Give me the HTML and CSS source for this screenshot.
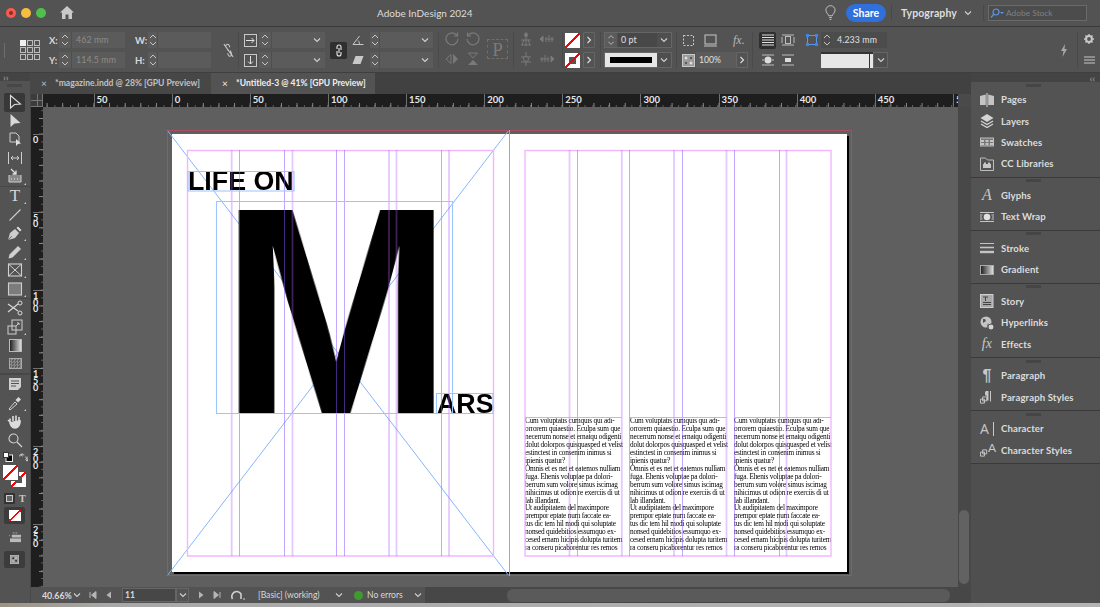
FILE: index.html
```html
<!DOCTYPE html>
<html lang="en">
<head>
<meta charset="utf-8">
<title>Adobe InDesign 2024</title>
<link rel="stylesheet" href="styles.css">
</head>
<body>
<svg class="sprite" width="0" height="0" aria-hidden="true">
  <symbol id="spin" viewBox="0 0 12 16"><path d="M3 6l3-3 3 3M3 10l3 3 3-3" fill="none" stroke="#c4c4c4" stroke-width="1"/></symbol>
  <symbol id="chev" viewBox="0 0 10 10"><path d="M2 3.500l3 3 3-3" fill="none" stroke="#d0d0d0" stroke-width="1.100"/></symbol>
  <symbol id="right" viewBox="0 0 10 10"><path d="M3.500 2l3 3-3 3" fill="none" stroke="#e0e0e0" stroke-width="1.100"/></symbol>
  <symbol id="squares" viewBox="0 0 9 9"><path d="M.5 3.500h4.500v4.500h-4.500zM3 5.500h4.500v-4.500h-4.500z" fill="none" stroke="#cfcfcf"/></symbol>
</svg>

<div class="app">
  <header class="titlebar">
    <span class="light red"></span><span class="light yellow"></span><span class="light green"></span>
    <svg class="home" viewBox="0 0 14 13"><path d="M7 0L0 6.500h2V13h3.500V8.500h3V13H12V6.500h2z" fill="#c9c9c9"/></svg>
    <span class="apptitle">Adobe InDesign 2024</span>
    <svg class="bulb" viewBox="0 0 12 17"><path d="M4 11.500C3.500 9 1 8.500 1 5.500a5 5 0 0 1 10 0c0 3-2.500 3.500-3 6zM4.500 13.500h3M5 15.500h2" fill="none" stroke="#c8c8c8"/></svg>
    <span class="share">Share</span>
    <span class="tsep"></span>
    <span class="workspace">Typography</span>
    <svg class="wschev"><use href="#chev"/></svg>
    <span class="tsep tsep2"></span>
    <span class="stock">
      <svg class="stockicon" viewBox="0 0 14 10"><circle cx="6" cy="4" r="3" fill="none" stroke="#5b96e8" stroke-width="1.200"/><path d="M4 6L1 9.500" stroke="#5b96e8" stroke-width="1.200"/><path d="M10 4h4l-2 2z" fill="#5b96e8"/></svg>
      Adobe Stock
    </span>
  </header>

  <section class="controlbar">
    <div class="cg g-grip"><span class="grip"></span></div>
    <div class="cg g-ref">
      <svg class="refgrid" viewBox="0 0 20 20">
        <rect x=".5" y=".5" width="5" height="5" fill="#eee" stroke="#eee"/><rect x="7.500" y=".5" width="5" height="5" class="rf"/><rect x="14.500" y=".5" width="5" height="5" class="rf"/>
        <rect x=".5" y="7.500" width="5" height="5" class="rf"/><rect x="7.500" y="7.500" width="5" height="5" class="rf"/><rect x="14.500" y="7.500" width="5" height="5" class="rf"/>
        <rect x=".5" y="14.500" width="5" height="5" class="rf"/><rect x="7.500" y="14.500" width="5" height="5" class="rf"/><rect x="14.500" y="14.500" width="5" height="5" class="rf"/>
      </svg>
    </div>
    <div class="cg g-xy">
      <div class="row"><span class="lbl">X:</span><span class="spin"><svg><use href="#spin"/></svg></span><span class="field dim">462 mm</span></div>
      <div class="row"><span class="lbl">Y:</span><span class="spin"><svg><use href="#spin"/></svg></span><span class="field dim">114.5 mm</span></div>
    </div>
    <div class="cg g-wh">
      <div class="row"><span class="lbl">W:</span><span class="spin nar"><svg><use href="#spin"/></svg></span><span class="field"></span></div>
      <div class="row"><span class="lbl">H:</span><span class="spin nar"><svg><use href="#spin"/></svg></span><span class="field"></span></div>
    </div>
    <div class="cg g-link">
      <svg class="linkicon" viewBox="0 0 12 16"><path d="M3 3.500a2 2 0 0 1 3.500-1.500l1 2.500M5 11l1 2.500a2 2 0 0 0 3.500-1.500L8 8M1 1l10 14M4 5l1.500 3" fill="none" stroke="#c8c8c8" stroke-width="1.100"/></svg>
    </div>
    <div class="cg g-scale sep">
      <div class="row"><svg class="ci13" viewBox="0 0 13 13"><rect x=".5" y=".5" width="12" height="12" fill="none" stroke="#c8c8c8"/><path d="M2 6.500h8M7.500 4l2.500 2.500L7.500 9" fill="none" stroke="#e0e0e0"/></svg><span class="spin"><svg><use href="#spin"/></svg></span><span class="field fchev"><svg><use href="#chev"/></svg></span></div>
      <div class="row"><svg class="ci13" viewBox="0 0 13 13"><rect x=".5" y=".5" width="12" height="12" fill="none" stroke="#c8c8c8"/><path d="M6.500 2v8M4 7.500l2.500 2.500L9 7.500" fill="none" stroke="#e0e0e0"/></svg><span class="spin"><svg><use href="#spin"/></svg></span><span class="field fchev"><svg><use href="#chev"/></svg></span></div>
    </div>
    <div class="cg g-chain">
      <span class="chainbtn"><svg viewBox="0 0 8 13"><path d="M2 5V3a2 2 0 0 1 4 0v3M6 8v2a2 2 0 0 1-4 0V7M4 4v5" fill="none" stroke="#e8e8e8" stroke-width="1.100"/></svg></span>
    </div>
    <div class="cg g-angle">
      <div class="row"><svg class="ci12" viewBox="0 0 12 10"><path d="M1 9.500h10.500M1 9.500L7.500 1M6 5.500c1 .8 1.500 2.200 1.500 4" fill="none" stroke="#c8c8c8"/></svg><span class="spin ang"><svg><use href="#spin"/></svg></span><span class="field fchev"><svg><use href="#chev"/></svg></span></div>
      <div class="row"><svg class="ci12" viewBox="0 0 12 10"><path d="M3.500 1h8l-3 8h-8z" fill="#c8c8c8"/></svg><span class="spin ang"><svg><use href="#spin"/></svg></span><span class="field fchev"><svg><use href="#chev"/></svg></span></div>
    </div>
    <div class="cg g-rot sep">
      <div class="rotgrid">
        <svg viewBox="0 0 14 14"><path d="M12 3.500A6 6 0 1 0 13 7M12.500 .5v3.500H9" fill="none" stroke="#7a7a7a" stroke-width="1.200"/></svg>
        <svg viewBox="0 0 14 14"><path d="M2 3.500A6 6 0 1 1 1 7M1.500 .5v3.500H5" fill="none" stroke="#7a7a7a" stroke-width="1.200"/></svg>
        <svg viewBox="0 0 14 14"><path d="M6 2.500v9L1 7z" fill="none" stroke="#7a7a7a"/><path d="M8 2v10l5-5z" fill="#7a7a7a"/></svg>
        <svg viewBox="0 0 14 14"><path d="M2.500 1h9L7 6z" fill="none" stroke="#7a7a7a"/><path d="M2 13h10L7 8z" fill="#7a7a7a"/></svg>
      </div>
      <span class="pbox">P</span>
    </div>
    <div class="cg g-align sep">
      <div class="rotgrid">
        <svg viewBox="0 0 14 14"><path d="M7 0v14M2 8h10M2 13h10M5 8l-2 5M9 8l2 5" stroke="#7a7a7a" fill="none"/><circle cx="7" cy="3" r="2" fill="#7a7a7a"/></svg>
        <svg viewBox="0 0 14 14"><path d="M3 4L0 7l3 3zM5 7h9M6 5v5M9 3v7M12 5v5" fill="#7a7a7a" stroke="#7a7a7a"/></svg>
        <svg viewBox="0 0 14 14"><path d="M7 0v14M2 5h10M2 10h10" stroke="#7a7a7a" fill="none"/><circle cx="7" cy="7" r="2.500" fill="#535353" stroke="#7a7a7a"/></svg>
        <svg viewBox="0 0 14 14"><path d="M11 4l3 3-3 3zM0 7h9M2 5v5M5 3v7M8 5v5" fill="#7a7a7a" stroke="#7a7a7a"/></svg>
      </div>
    </div>
    <div class="cg g-swatch sep">
      <div class="row"><span class="swatch none"></span><span class="arrowbtn"><svg><use href="#right"/></svg></span></div>
      <div class="row"><span class="swatch none stroke"></span><span class="arrowbtn"><svg><use href="#right"/></svg></span></div>
    </div>
    <div class="cg g-weight sep">
      <div class="row framed"><span class="spin"><svg><use href="#spin"/></svg></span><span class="weight">0 pt</span><span class="ddbtn"><svg><use href="#chev"/></svg></span></div>
      <div class="row framed"><span class="strokestyle"><i></i></span><span class="ddbtn"><svg><use href="#chev"/></svg></span></div>
    </div>
    <div class="cg g-fx sep">
      <div class="row">
        <svg class="ci13 fxa" viewBox="0 0 13 13"><path d="M1.500 1.500h10v10h-10z" fill="none" stroke="#c8c8c8" stroke-dasharray="2 1.500"/></svg>
        <svg class="ci13 fxb" viewBox="0 0 13 13"><rect x="1" y="1" width="11" height="9" fill="none" stroke="#c8c8c8"/><path d="M0 12h13" stroke="#8c8c8c" stroke-width="2"/></svg>
        <span class="fxtext">fx.</span>
      </div>
      <div class="row">
        <svg class="ci13 fxa" viewBox="0 0 13 13"><rect x=".5" y=".5" width="12" height="12" fill="#9a9a9a" stroke="#c8c8c8"/><circle cx="4" cy="4" r="1.500" fill="#ddd"/><circle cx="9" cy="9" r="1.500" fill="#ddd"/><circle cx="9" cy="4" r="1" fill="#444"/><circle cx="4" cy="9" r="1" fill="#444"/></svg>
        <span class="opacity">100%</span><span class="arrowbtn op"><svg><use href="#right"/></svg></span>
      </div>
    </div>
    <div class="cg g-wrap sep">
      <div class="rotgrid wrapg">
        <span class="wrapon"><svg viewBox="0 0 14 12"><path d="M1 1h12M1 3.500h12M1 6h12M1 8.500h12M1 11h12" stroke="#e0e0e0"/></svg></span>
        <svg viewBox="0 0 14 12"><path d="M1 1h12M1 11h12M1 3v6M13 3v6" stroke="#bdbdbd"/><rect x="4.500" y="2.500" width="5" height="7" fill="none" stroke="#bdbdbd"/></svg>
        <svg viewBox="0 0 14 12"><path d="M1 1h12M1 11h12" stroke="#bdbdbd"/><circle cx="7" cy="6" r="3.500" fill="#dcdcdc"/><path d="M1 6h2M11 6h2" stroke="#bdbdbd"/></svg>
        <svg viewBox="0 0 14 12"><path d="M1 1h12M1 11h12" stroke="#bdbdbd"/><rect x="4" y="4" width="6" height="4" fill="#dcdcdc"/></svg>
      </div>
    </div>
    <div class="cg g-corner">
      <div class="row"><svg class="ci12 cornericon" viewBox="0 0 12 12"><path d="M1.500 1.500h9v9h-9z" fill="none" stroke="#5b96e8"/><path d="M0 0h3v3H0zM9 0h3v3H9zM0 9h3v3H0zM9 9h3v3H9z" fill="#3f86e6"/></svg><span class="spin"><svg><use href="#spin"/></svg></span><span class="field val">4.233 mm</span></div>
      <div class="row cornerrow"><span class="cornerswatch"></span><span class="ddbtn corner"><svg><use href="#chev"/></svg></span></div>
    </div>
    <div class="cg g-bolt">
      <svg class="bolt" viewBox="0 0 8 13"><path d="M5 0L1 7h2.500L2.500 13 7 5H4.500z" fill="#a8a8a8"/></svg>
    </div>
    <div class="cg g-gear sep">
      <svg class="gear" viewBox="0 0 12 12"><circle cx="6" cy="6" r="3.500" fill="none" stroke="#c8c8c8" stroke-width="2.400"/><path d="M6 0v2M6 10v2M0 6h2M10 6h2M1.800 1.800l1.400 1.400M8.800 8.800l1.400 1.400M1.800 10.200l1.400-1.400M8.800 3.200l1.400-1.400" stroke="#c8c8c8" stroke-width="1.600"/></svg>
      <svg class="menu" viewBox="0 0 11 8"><path d="M0 1h11M0 4h11M0 7h11" stroke="#c8c8c8"/></svg>
    </div>
  </section>

  <div class="workspace-area">
    <aside class="tools">
      <div class="collapse"><span class="chevs">››</span></div>
      <div class="gripbar"></div>
      <div class="tool on"><svg viewBox="0 0 16 16"><path d="M3.500 1.500v12.500l4-3.500 6-.5z" fill="none" stroke="#dedede" stroke-width="1.100"/></svg></div>
      <div class="tool"><svg viewBox="0 0 16 16"><path d="M3.500 1v13l4-3.500 6-.5z" fill="#d8d8d8"/></svg></div>
      <div class="tool"><svg viewBox="0 0 16 16"><path d="M3 2h6l3 3v6H3z" fill="none" stroke="#cfcfcf"/><path d="M9 8v7l2-2 3-.5z" fill="#e0e0e0"/></svg></div>
      <div class="tool"><svg viewBox="0 0 16 16"><path d="M1.500 2v12M14.500 2v12M4 8h8M6 6L4 8l2 2M10 6l2 2-2 2" fill="none" stroke="#cfcfcf"/></svg></div>
      <div class="tool ext"><svg viewBox="0 0 16 16"><path d="M2 7v7h12V7" fill="#888" stroke="#d0d0d0"/><path d="M4 1l5 5M9 2.500V6H5.500" fill="none" stroke="#e0e0e0" stroke-width="1.300"/><path d="M4 11h1M7 11h1M10 11h1" stroke="#eee"/></svg></div>
      <div class="tsp"></div>
      <div class="tool ext type">T</div>
      <div class="tool"><svg viewBox="0 0 16 16"><path d="M2.500 13.500l11-11" stroke="#cfcfcf" stroke-width="1.100"/></svg></div>
      <div class="tool ext"><svg viewBox="0 0 16 16"><path d="M1 15l2-7 5-4 4 4-4 5z" fill="#cfcfcf"/><path d="M9 3l2-2 4 4-2 2zM1 15l4-4" fill="#cfcfcf" stroke="#535353" stroke-width=".8"/></svg></div>
      <div class="tool ext"><svg viewBox="0 0 16 16"><path d="M1.500 14.500l1-4L11 2l3 3-8.500 8.500z" fill="#cfcfcf"/></svg></div>
      <div class="tool ext"><svg viewBox="0 0 16 16"><rect x="1.500" y="2" width="13" height="12" fill="none" stroke="#d0d0d0" stroke-width="1.100"/><path d="M1.500 2l13 12M14.500 2l-13 12" stroke="#d0d0d0"/></svg></div>
      <div class="tool ext"><svg viewBox="0 0 16 16"><rect x="1.500" y="2" width="13" height="12" fill="#7c7c7c" stroke="#cfcfcf" stroke-width="1.100"/></svg></div>
      <div class="tsp"></div>
      <div class="tool"><svg viewBox="0 0 16 16"><path d="M1 4l10 7M1 12l10-8" stroke="#d8d8d8" stroke-width="1.200"/><circle cx="13" cy="3" r="2" fill="none" stroke="#d8d8d8"/><circle cx="13" cy="13" r="2" fill="none" stroke="#d8d8d8"/></svg></div>
      <div class="tool ext"><svg viewBox="0 0 16 16"><rect x="1" y="7" width="8" height="8" fill="none" stroke="#cfcfcf"/><rect x="5" y="1" width="10" height="10" fill="none" stroke="#cfcfcf"/><path d="M9 7l3-3M10 4h2v2" stroke="#cfcfcf" fill="none"/></svg></div>
      <div class="tool"><span class="gradswatch"></span></div>
      <div class="tool"><span class="feather"></span></div>
      <div class="tsp two"></div>
      <div class="tool"><svg viewBox="0 0 16 16"><path d="M2 2h12v9l-3 3H2z" fill="#cfcfcf"/><path d="M4 5h8M4 7.500h8M4 10h5" stroke="#535353"/></svg></div>
      <div class="tool ext"><svg viewBox="0 0 16 16"><path d="M2 14l6-7 2 2-7 6z" fill="none" stroke="#cfcfcf"/><path d="M8.500 5l3-3 2.500 2.500-3 3z" fill="#d8d8d8"/></svg></div>
      <div class="tool"><svg viewBox="0 0 16 16"><path d="M3 9V5.500M6 8V3M9 8V2.500M12 8.500V4M3 9c0 3 2 6 5 6s5-3 5-6V7" fill="#dcdcdc" stroke="#dcdcdc" stroke-width="1.600"/><path d="M3 9l-2-2" stroke="#dcdcdc" stroke-width="1.500"/></svg></div>
      <div class="tool"><svg viewBox="0 0 16 16"><circle cx="6.500" cy="6.500" r="4.500" fill="none" stroke="#d2d2d2" stroke-width="1.100"/><path d="M10 10l5 5" stroke="#d2d2d2" stroke-width="1.300"/></svg></div>
      <div class="swaprow">
        <svg class="defaults" viewBox="0 0 10 10"><rect x="3" y="3" width="6.500" height="6.500" fill="#000" stroke="#eee"/><rect x=".5" y=".5" width="5" height="5" fill="#fff" stroke="#333"/></svg>
        <svg class="swap" viewBox="0 0 10 10"><path d="M1 4V2h5M7 4l2 3M4 .5L2 2l2 1.500M9 9V4M7 7l2 2 1-2" fill="none" stroke="#cfcfcf"/></svg>
      </div>
      <div class="fillstroke">
        <span class="fsback"></span>
        <span class="fsfront"></span>
      </div>
      <div class="formatrow">
        <span class="fmt"><i></i></span>
        <span class="fmtT">T</span>
      </div>
      <div class="toolbtn"><span class="swatch none apply"></span></div>
      <div class="tool modeicon"><svg viewBox="0 0 14 12"><path d="M4 1h2M7 1h2M0 4h1" stroke="#aaa"/><rect x="3" y="3" width="10" height="3" fill="#bbb"/><rect x="1" y="7" width="12" height="4" fill="#bbb"/></svg></div>
      <div class="toolbtn view"><svg viewBox="0 0 14 14"><rect x=".5" y=".5" width="13" height="13" fill="#9a9a9a" stroke="#c8c8c8"/><circle cx="5" cy="5" r="1.500" fill="#333"/><circle cx="9.500" cy="9" r="1.500" fill="#333"/><circle cx="9.500" cy="4.500" r="1" fill="#eee"/><circle cx="4.500" cy="9.500" r="1" fill="#eee"/></svg></div>
    </aside>

    <main class="center">
      <div class="tabs">
        <div class="tab"><span class="x">×</span>*magazine.indd @ 28% [GPU Preview]</div>
        <div class="tab active"><span class="x">×</span>*Untitled-3 @ 41% [GPU Preview]</div>
      </div>
      <div class="hruler">
        <span class="rcorner"></span>
        <div class="hmarks">
          <span>50</span><span>0</span><span>50</span><span>100</span><span>150</span><span>200</span><span>250</span><span>300</span><span>350</span><span>400</span><span>450</span><span>5</span>
        </div>
      </div>
      <div class="middle">
        <div class="vruler">
          <span>0</span><span>50</span><span>100</span><span>150</span><span>200</span><span>250</span>
        </div>
        <div class="canvas">
          <div class="pages"></div>
          <svg class="layer" viewBox="43 107 915 480">
            <path class="xline" d="M167 130L509 576M509 130L167 576"/>
          </svg>
          <div class="frametext lifeon">LIFE ON</div>
          <div class="frametext bigm">M</div>
          <div class="frametext ars">ARS</div>
          <div class="body col1">Cum voluptatis cumquis qui adi-<br>orrorem quiaestio. Eculpa sum que<br>necerrum nonse et ernatqu odigenti<br>dolut dolorpos quisquasped et velist<br>estinctest in consenim inimus si<br>ipienis quatur?<br>Omnis et es net et eatemos nulliam<br>fuga. Ehenis voluptae pa dolori-<br>berrum sum volore simus iscimag<br>nihicimus ut odion re exerciis di ut<br>lab illandant.<br>Ut audipitatem del maximpore<br>prempor eptate num faccate ea-<br>tus dic tem hil modi qui soluptate<br>nonsed quidebitios essumquo ex-<br>cesed ernam hicipis dolupta turitem<br>ra conseru picaborentur res remos</div>
          <div class="body col2">Cum voluptatis cumquis qui adi-<br>orrorem quiaestio. Eculpa sum que<br>necerrum nonse et ernatqu odigenti<br>dolut dolorpos quisquasped et velist<br>estinctest in consenim inimus si<br>ipienis quatur?<br>Omnis et es net et eatemos nulliam<br>fuga. Ehenis voluptae pa dolori-<br>berrum sum volore simus iscimag<br>nihicimus ut odion re exerciis di ut<br>lab illandant.<br>Ut audipitatem del maximpore<br>prempor eptate num faccate ea-<br>tus dic tem hil modi qui soluptate<br>nonsed quidebitios essumquo ex-<br>cesed ernam hicipis dolupta turitem<br>ra conseru picaborentur res remos</div>
          <div class="body col3">Cum voluptatis cumquis qui adi-<br>orrorem quiaestio. Eculpa sum que<br>necerrum nonse et ernatqu odigenti<br>dolut dolorpos quisquasped et velist<br>estinctest in consenim inimus si<br>ipienis quatur?<br>Omnis et es net et eatemos nulliam<br>fuga. Ehenis voluptae pa dolori-<br>berrum sum volore simus iscimag<br>nihicimus ut odion re exerciis di ut<br>lab illandant.<br>Ut audipitatem del maximpore<br>prempor eptate num faccate ea-<br>tus dic tem hil modi qui soluptate<br>nonsed quidebitios essumquo ex-<br>cesed ernam hicipis dolupta turitem<br>ra conseru picaborentur res remos</div>
          <svg class="layer" viewBox="43 107 915 480">
            <path class="bleed" d="M167.500 130.500H851.500V575.500H167.500z"/>
            <path class="spine" d="M509.500 130V576"/>
            <path class="margin" d="M187.500 150.500H493.500V556H187.500zM525 150.500H831V556H525z"/>
            <path class="gthin" d="M239.500 150V556M284.500 150V556M336.500 150V556M344.500 150V556M441.500 150V556M577.500 150V556M629.500 150V556M682.500 150V556M734.500 150V556M779.500 150V556"/>
            <path class="gthick" d="M231.700 150V556M292.500 150V556M389 150V556M396.500 150V556M449 150V556M569.500 150V556M621.800 150V556M674 150V556M726.500 150V556M786.500 150V556"/>
            <path class="frame" d="M188 171.500H294V191H188zM216.500 201.500H452.500V413.500H216.500zM436.500 393.500H493V413.500H436.500z"/>
            <path class="frame" d="M525 417.500H621.500M630 417.500H727M734 417.500H831"/>
          </svg>
        </div>
        <div class="vscroll"><span class="vthumb"></span></div>
      </div>
      <footer class="status">
        <span class="zoomval">40.66%</span>
        <svg class="st chevz"><use href="#chev"/></svg>
        <svg class="st navfirst" viewBox="0 0 10 10"><path d="M2 2v6M8 1.500v7L3.500 5z" stroke="#b4b4b4" fill="#b4b4b4"/></svg>
        <svg class="st navprev" viewBox="0 0 10 10"><path d="M7 1.500v7L2.500 5z" fill="#b4b4b4"/></svg>
        <span class="pagefield">11</span><span class="pagedd"><svg><use href="#chev"/></svg></span>
        <svg class="st navnext" viewBox="0 0 10 10"><path d="M3 1.500v7L7.500 5z" fill="#b4b4b4"/></svg>
        <svg class="st navlast" viewBox="0 0 10 10"><path d="M8 2v6M2 1.500v7L6.500 5z" stroke="#b4b4b4" fill="#b4b4b4"/></svg>
        <svg class="st gauge" viewBox="0 0 14 12"><path d="M1.500 10A4.800 4.800 0 0 1 10 5v5" fill="none" stroke="#cfcfcf" stroke-width="1.600"/><path d="M12 10h2" stroke="#cfcfcf"/></svg>
        <span class="preflight">[Basic] (working)</span>
        <svg class="st chevp"><use href="#chev"/></svg>
        <span class="dot"></span>
        <span class="errors">No errors</span>
        <svg class="st cheve"><use href="#chev"/></svg>
        <span class="hscroll"><span class="hthumb"></span></span>
      </footer>
    </main>

    <aside class="dock">
      <div class="collapse dockhead"><span class="chevs">‹‹</span></div>
      <div class="pgroup">
        <div class="gripbar small"></div>
        <div class="pitem"><svg viewBox="0 0 14 14"><path d="M0 3l5.800-1.500V12H0zM14 3L8.200 1.500V12H14z" fill="#c4c4c4"/><path d="M7 0v14" stroke="#c4c4c4" stroke-width="1.200"/></svg>Pages</div>
        <div class="pitem"><svg viewBox="0 0 14 14"><path d="M7 0l6.500 4L7 8 .5 4z" fill="#d4d4d4"/><path d="M1 7l6 3.500L13 7M1 10l6 3.500 6-3.500" fill="none" stroke="#d4d4d4" stroke-width="1.300"/></svg>Layers</div>
        <div class="pitem"><svg viewBox="0 0 14 14"><rect x=".5" y="3" width="13" height="8" fill="#777" stroke="#bdbdbd"/><path d="M1 5h3v2H1zM5.500 5h3v2h-3zM10 5h3v2h-3zM1 8h3v2H1zM5.500 8h3v2h-3zM10 8h3v2h-3z" fill="#c4c4c4"/></svg>Swatches</div>
        <div class="pitem"><svg viewBox="0 0 14 14"><path d="M.5 1h5l2 2h6v10.500H.5z" fill="none" stroke="#bdbdbd"/><path d="M3 7h8v4H3zM4 5.500h2V7H4zM8 5.500h2V7H8z" fill="#c8c8c8"/></svg>CC Libraries</div>
      </div>
      <div class="pgroup">
        <div class="gripbar small"></div>
        <div class="pitem"><span class="gi serif-i">A</span>Glyphs</div>
        <div class="pitem"><svg viewBox="0 0 14 14"><path d="M0 2.500h14M0 11.500h14M0 5h2.500M11.500 5H14M0 7h2M12 7h2M0 9h2.500M11.500 9H14" stroke="#c4c4c4"/><circle cx="7" cy="7" r="3.300" fill="#e0e0e0"/></svg>Text Wrap</div>
      </div>
      <div class="pgroup">
        <div class="gripbar small"></div>
        <div class="pitem"><svg viewBox="0 0 14 14"><path d="M0 2.500h14" stroke="#c4c4c4" stroke-width="1"/><path d="M0 6.500h14" stroke="#c4c4c4" stroke-width="1.600"/><path d="M0 11h14" stroke="#c4c4c4" stroke-width="2.400"/></svg>Stroke</div>
        <div class="pitem"><span class="gradicon"></span>Gradient</div>
      </div>
      <div class="pgroup">
        <div class="gripbar small"></div>
        <div class="pitem"><svg viewBox="0 0 14 14"><rect x=".5" y=".5" width="12.500" height="13" fill="#a8a8a8" stroke="#cfcfcf"/><path d="M3 3h5M5.500 3v4M3 8.500h8M3 10.500h8" stroke="#444"/></svg>Story</div>
        <div class="pitem"><svg viewBox="0 0 14 14"><circle cx="6" cy="6" r="5.500" fill="#c4c4c4"/><path d="M3 3h2l1 2-3 2zM8 7l1 3-2 1z" fill="#535353"/><circle cx="11" cy="11" r="3" fill="#d4d4d4" stroke="#535353"/></svg>Hyperlinks</div>
        <div class="pitem"><span class="gi fx">fx</span>Effects</div>
      </div>
      <div class="pgroup">
        <div class="gripbar small"></div>
        <div class="pitem"><span class="gi pilcrow">¶</span>Paragraph</div>
        <div class="pitem"><svg viewBox="0 0 14 14"><use href="#squares" x="0" y="6" width="8" height="8"/><path d="M6 1h2.500v9.500H7V6C5.500 6 5 5 5 3.500S5.500 1 6 1zM10 1h1v10.500h-1z" fill="#c8c8c8"/></svg>Paragraph Styles</div>
      </div>
      <div class="pgroup">
        <div class="gripbar small"></div>
        <div class="pitem"><span class="gi chara">A</span>Character</div>
        <div class="pitem"><svg viewBox="0 0 14 14"><use href="#squares" x="0" y="6" width="8" height="8"/></svg><span class="gi charb">A</span>Character Styles</div>
      </div>
      <div class="dockrest"></div>
    </aside>
  </div>
  <div class="deskstrip"></div>
</div>
</body>
</html>
```

FILE: styles.css
```css
* { box-sizing: border-box; margin: 0; padding: 0; }
html, body { width: 1100px; height: 607px; overflow: hidden; background: #535353; }
body { font-family: Lato, "Open Sans", "Liberation Sans", sans-serif; color: #e0e0e0; font-size: 10px; }
.sprite { position: absolute; }
svg { display: block; flex: none; }

.app { width: 1100px; height: 607px; display: flex; flex-direction: column; }

/* title bar */
.titlebar { height: 27px; flex: none; display: flex; align-items: center; background: #535353; border-bottom: 1px solid #3a3a3a; padding-left: 6px; padding-bottom: 1px; }
.light { width: 10px; height: 10px; border-radius: 50%; margin-right: 5px; }
.red { background: #f25c54; box-shadow: inset 0 0 0 3px #f25c54, inset 0 0 0 5px #8c2a25; }
.yellow { background: #f6bd3f; }
.green { background: #50c04c; }
.home { width: 14px; height: 13px; margin-left: 9px; }
.apptitle { margin-left: 303px; width: 96px; font-size: 10px; white-space: nowrap; color: #dcdcdc; }
.bulb { width: 11px; height: 16px; margin-left: 352px; }
.share { margin-left: 10px; width: 40px; height: 18px; border-radius: 9px; background: #2f70dc; color: #fff; font-size: 10.500px; font-weight: 700; text-align: center; line-height: 18px; }
.tsep { width: 1px; height: 16px; background: #484848; margin-left: 5px; }
.workspace { margin-left: 9px; width: 58px; font-size: 10.500px; font-weight: 700; white-space: nowrap; color: #dedede; letter-spacing: .1px; }
.wschev { width: 10px; height: 10px; margin-left: 4px; }
.tsep2 { margin-left: 10px; }
.stock { margin-left: 4px; width: 99px; height: 16px; display: flex; align-items: center; border: 1px solid #6a6a6a; background: #4c4c4c; color: #808080; font-size: 8.400px; white-space: nowrap; padding-left: 1px; }
.stockicon { width: 14px; height: 10px; margin-right: 2px; }

/* control bar */
.controlbar { height: 46px; flex: none; display: flex; background: #535353; border-bottom: 1px solid #3f3f3f; padding-top: 5px; }
.cg { display: flex; flex-direction: column; gap: 4px; height: 36px; flex: none; }
.sep { border-left: 1px solid #4a4a4a; }
.row { display: flex; align-items: center; height: 16px; }
.g-grip { width: 16px; justify-content: center; }
.grip { width: 1px; height: 15px; margin-left: 4px; background: #6e6e6e; }
.g-ref { width: 30px; justify-content: center; padding-left: 4px; }
.refgrid { width: 20px; height: 20px; }
.rf { fill: none; stroke: #bcbcbc; }
.g-xy { width: 84px; padding-left: 3px; }
.g-wh { width: 85px; padding-left: 5px; }
.lbl { width: 10px; font-size: 9.500px; font-weight: 700; color: #d8d8d8; }
.spin { width: 13px; height: 16px; background: #5b5b5b; border-right: 1px solid #4f4f4f; flex: none; }
.spin svg { width: 12px; height: 16px; }
.nar { width: 10px; margin-left: 3px; }
.nar svg { margin-left: -1px; }
.field { width: 53px; height: 16px; background: #5b5b5b; font-size: 8.800px; line-height: 16px; padding-left: 4px; white-space: nowrap; letter-spacing: .1px; }
.dim { color: #8c8c8c; }
.g-link { width: 23px; justify-content: center; align-items: center; }
.linkicon { width: 11px; height: 15px; margin-left: 3px; }
.g-scale { width: 90px; padding-left: 5px; }
.ci13 { width: 13px; height: 13px; }
.ci12 { width: 12px; height: 10px; }
.g-scale .spin { margin-left: 2px; }
.fchev { display: flex; align-items: center; justify-content: flex-end; padding-right: 3px; }
.fchev svg { width: 10px; height: 10px; }
.g-chain { width: 22px; justify-content: center; padding-left: 2px; }
.chainbtn { width: 17px; height: 17px; background: #2f2f2f; border-radius: 2px; display: flex; align-items: center; justify-content: center; }
.chainbtn svg { width: 8px; height: 13px; }
.g-angle { width: 88px; padding-left: 2px; }
.ang { width: 10px; margin-left: 6px; }
.ang svg { margin-left: -1px; }
.g-rot { width: 75px; flex-direction: row; align-items: center; gap: 0; padding-left: 6px; padding-bottom: 2px; }
.rotgrid { display: grid; grid-template-columns: 14px 14px; column-gap: 7px; row-gap: 6px; }
.rotgrid svg { width: 14px; height: 14px; }
.pbox { width: 21px; height: 20px; margin-left: 7px; color: #7a7a7a; font-family: "Liberation Serif", serif; font-size: 19px; line-height: 20px; text-align: center; border: 1px dashed #6e6e6e; }
.g-align { width: 49px; padding-left: 5px; padding-bottom: 2px; justify-content: center; }
.g-swatch { width: 38px; padding-left: 2px; }
.swatch { display: block; width: 15px; height: 15px; flex: none; }
.none { background: linear-gradient(to top left, #fff 45%, #f00 45%, #f00 55%, #fff 55%); }
.stroke { position: relative; }
.stroke::after { content: ""; position: absolute; left: 4px; top: 4px; width: 7px; height: 7px; background: #555; }
.g-swatch .stroke::before { content: ""; position: absolute; left: 0; top: 0; width: 15px; height: 15px; z-index: 1; background: linear-gradient(to top left, transparent 45%, #f00 45%, #f00 55%, transparent 55%); }
.arrowbtn { width: 12px; height: 16px; margin-left: 3px; border: 1px solid #666; border-radius: 1px; display: flex; align-items: center; justify-content: center; flex: none; }
.arrowbtn svg { width: 10px; height: 10px; }
.g-weight { width: 76px; padding-left: 3px; }
.framed { width: 68px; border: 1px solid #666; }
.weight { width: 39px; height: 14px; background: #484848; font-size: 8.800px; line-height: 14px; padding-left: 3px; color: #e0e0e0; letter-spacing: .1px; }
.framed .spin { height: 14px; }
.framed .spin svg { height: 14px; }
.ddbtn { width: 14px; height: 14px; display: flex; align-items: center; justify-content: center; background: #4f4f4f; flex: none; }
.ddbtn svg { width: 10px; height: 10px; }
.strokestyle { width: 52px; height: 14px; background: #e6e6e6; display: flex; align-items: center; justify-content: center; }
.strokestyle i { display: block; width: 42px; height: 6px; background: #000; }
.g-fx { width: 76px; padding-left: 5px; }
.fxb { margin-left: 9px; }
.fxtext { margin-left: 16px; font-family: "Liberation Serif", serif; font-style: italic; font-size: 12px; color: #b8b8b8; }
.opacity { margin-left: 1px; width: 40px; height: 16px; background: #5b5b5b; font-size: 8.600px; line-height: 16px; padding-left: 3px; }
.op { margin-left: 0; }
.g-wrap { width: 50px; padding-left: 6px; justify-content: center; }
.wrapg { grid-template-columns: 17px 14px; grid-auto-rows: 16px; column-gap: 5px; row-gap: 4px; align-items: center; justify-items: center; }
.wrapg svg { width: 14px; height: 12px; }
.wrapon { width: 17px; height: 17px; background: #2f2f2f; border-radius: 2px; display: flex; align-items: center; justify-content: center; }
.g-corner { width: 89px; padding-left: 4px; }
.cornericon { width: 12px; height: 12px; margin-right: 3px; }
.val { color: #e0e0e0; padding-left: 3px; background: #4c4c4c; }
.g-corner .spin { background: #4c4c4c; }
.cornerrow { padding-left: 15px; }
.cornerswatch { width: 52px; height: 16px; background: #e6e6e6; border-top: 2px solid #333; box-shadow: inset -3px 0 0 #e6e6e6, inset -4px 0 0 #333; flex: none; }
.corner { width: 15px; height: 16px; border: 1px solid #666; }
.g-bolt { margin-left: 165px; width: 16px; justify-content: center; align-items: center; }
.bolt { width: 8px; height: 13px; }
.g-gear { margin-left: 5px; width: 23px; align-items: center; gap: 12px; padding-top: 2px; padding-left: 0; }
.gear { width: 10px; height: 10px; }
.menu { width: 11px; height: 8px; }

/* workspace */
.workspace-area { flex: 1; display: flex; min-height: 0; }
.tools { width: 31px; flex: none; display: flex; flex-direction: column; background: #535353; border-right: 1px solid #484848; }
.collapse { height: 8px; background: #444; display: flex; align-items: center; color: #a6a6a6; font-size: 9px; line-height: 8px; flex: none; padding-left: 3px; }
.chevs { font-size: 10px; line-height: 8px; }
.gripbar { height: 12px; flex: none; position: relative; }
.gripbar::after { content: ""; position: absolute; left: 7px; top: 3px; width: 15px; height: 3px; background: #474747; }
.tool { height: 18.500px; width: 30px; flex: none; display: flex; align-items: center; justify-content: center; position: relative; }
.tool svg { width: 16px; height: 16px; }
.tool.on::before { content: ""; position: absolute; left: 4px; right: 5px; top: 0; bottom: 0; background: #383838; border-radius: 2px; }
.tool.on svg { position: relative; }
.ext::after { content: ""; position: absolute; right: 4px; bottom: 1px; border: 1.500px solid transparent; border-right-color: #ccc; border-bottom-color: #ccc; }
.tsp { height: 1.250px; background: #474747; flex: none; }
.tsp.two { height: 2px; }
.type { font-family: "Liberation Serif", serif; font-size: 17px; color: #d6d6d6; }
.gradswatch { width: 13px; height: 13px; background: linear-gradient(to right, #222, #ddd); border: 1px solid #bbb; }
.feather { width: 13px; height: 11px; background: repeating-conic-gradient(#8a8a8a 0 25%, #5e5e5e 0 50%) 0 0 / 3px 3px; border: 1px solid #aaa; }
.swaprow { height: 16px; display: flex; align-items: center; padding-left: 3px; flex: none; }
.defaults { width: 10px; height: 10px; }
.swap { width: 9px; height: 9px; margin-left: 6px; }
.fillstroke { height: 25px; width: 30px; position: relative; flex: none; }
.fsback { position: absolute; left: 11px; top: 7px; width: 15px; height: 15px; background: linear-gradient(to top left, #fff 45%, #f00 45%, #f00 55%, #fff 55%); }
.fsback::after { content: ""; position: absolute; left: 4px; top: 4px; width: 7px; height: 7px; background: #555; }
.fsfront { position: absolute; left: 3px; top: 0; width: 15px; height: 15px; background: linear-gradient(to top left, #fff 45%, #f00 45%, #f00 55%, #fff 55%); box-shadow: 0 0 0 1px #535353; }
.formatrow { height: 17px; display: flex; align-items: center; padding-left: 4px; flex: none; }
.fmt { width: 11px; height: 11px; background: #333; display: flex; align-items: center; justify-content: center; border-radius: 1px; }
.fmt i { display: block; width: 7px; height: 7px; border: 1px solid #ccc; background: #666; }
.fmtT { margin-left: 4px; font-family: "Liberation Serif", serif; font-weight: 700; font-size: 10px; color: #c8c8c8; }
.toolbtn { margin-left: 4px; width: 21px; height: 17px; flex: none; background: #3c3c3c; border-radius: 2px; display: flex; align-items: center; justify-content: center; }
.apply { width: 12px; height: 11px; }
.modeicon { height: 27px; }
.modeicon svg { width: 13px; height: 11px; }
.view svg { width: 9px; height: 9px; }

/* center */
.center { width: 940px; flex: none; display: flex; flex-direction: column; }
.tabs { height: 21px; flex: none; display: flex; background: #414141; }
.tab { width: 180px; flex: none; background: #474747; font-size: 8.600px; font-weight: 700; color: #c0c0c0; line-height: 21px; white-space: nowrap; padding-left: 10px; display: flex; }
.tab .x { width: 14px; flex: none; font-size: 10px; font-weight: 400; }
.tab.active { width: 164px; background: #535353; color: #eee; padding-left: 11px; }
.hruler { height: 13px; flex: none; display: flex; background: #4a4a4a; }
.rcorner { width: 12px; height: 13px; flex: none; background: #3c3c3c; box-shadow: inset -1px -1px 0 #777; background-image: linear-gradient(#777,#777), linear-gradient(#777,#777); background-size: 1px 100%, 100% 1px; background-repeat: no-repeat; background-position: 6px 0, 0 6px; }
.hmarks { width: 915px; flex: none; display: flex; overflow: hidden; background-color: #1e1e1e; padding-left: 50.500px; background-image: linear-gradient(to right, #8a8a8a 1px, transparent 1px), linear-gradient(to right, #5e5e5e 1px, transparent 1px); background-size: 15.625px 4px, 7.812px 2px; background-position: 3.600px 100%, 3.600px 100%; background-repeat: repeat-x; }
.hmarks span { width: 78.140px; flex: none; border-left: 1px solid #707070; font-size: 9.500px; font-weight: 700; line-height: 12px; color: #e8e8e8; padding-left: 2px; }
.middle { flex: 1; display: flex; min-height: 0; }
.vruler { width: 12px; flex: none; display: flex; flex-direction: column; padding-top: 26.500px; background-color: #1e1e1e; background-image: linear-gradient(to bottom, #8a8a8a 1px, transparent 1px), linear-gradient(to bottom, #5e5e5e 1px, transparent 1px); background-size: 4px 15.625px, 2px 7.812px; background-position: 100% 11px, 100% 11px; background-repeat: repeat-y; overflow: hidden; }
.vruler span { height: 78.170px; flex: none; border-top: 1px solid #707070; font-size: 9px; font-weight: 700; line-height: 6.800px; color: #e8e8e8; width: 7px; margin-left: 2px; padding-top: 2px; word-break: break-all; }
.canvas { width: 915px; flex: none; position: relative; background: #5f5f5f; overflow: hidden; }
.pages { position: absolute; left: 129px; top: 27px; width: 675px; height: 438px; background: #fff; box-shadow: 2px 2px 0 #000; }
.layer { position: absolute; left: 0; top: 0; width: 915px; height: 480px; }
.xline { fill: none; stroke: #86b6ff; stroke-width: 1; }
.bleed { fill: none; stroke: #a84f62; stroke-width: 1; }
.spine { stroke: #a8a8a8; stroke-width: 1; }
.margin { fill: none; stroke: #f2b8ff; stroke-width: 1.400; }
.gthin { stroke: #8a50ff; stroke-width: 1; opacity: .5; fill: none; }
.gthick { stroke: #b060ff; stroke-width: 1.800; opacity: .34; fill: none; }
.frame { fill: none; stroke: #9cc4ff; stroke-width: 1.100; }
.frametext { position: absolute; font-family: "Liberation Sans", Arial, sans-serif; font-weight: 700; color: #000; white-space: nowrap; will-change: transform; }
.lifeon { left: 145px; top: 60px; font-size: 26.800px; line-height: 28px; }
.ars { left: 394px; top: 283px; font-size: 26.800px; line-height: 28px; }
.bigm { left: 176.700px; top: 98px; width: 210px; font-size: 295px; line-height: 212px; transform: scaleX(.945); transform-origin: 0 0; }
.body { position: absolute; top: 310px; font-family: "Liberation Serif", serif; font-size: 7.300px; letter-spacing: -.2px; line-height: 7.950px; color: #000; white-space: nowrap; will-change: transform; }
.col1 { left: 482px; }
.col2 { left: 587px; }
.col3 { left: 691px; }
.vscroll { width: 13px; flex: none; background: #484848; padding: 403px 1px 0 1px; }
.vthumb { display: block; width: 10px; height: 74px; border-radius: 5px; background: #626262; }

/* status */
.status { height: 16px; flex: none; display: flex; align-items: center; background: #535353; font-size: 8.600px; color: #d8d8d8; padding-left: 11px; white-space: nowrap; }
.st { width: 10px; height: 10px; flex: none; }
.zoomval { width: 27px; font-size: 8.800px; font-weight: 700; }
.chevz { margin-left: 3px; }
.navfirst { margin-left: 6px; }
.navprev { margin-left: 6px; }
.pagefield { margin-left: 8px; width: 54px; height: 14px; background: #474747; border: 1px solid #666; line-height: 12px; padding-left: 2px; font-weight: 700; }
.pagedd { width: 13px; height: 14px; border: 1px solid #666; display: flex; align-items: center; justify-content: center; }
.pagedd svg { width: 10px; height: 10px; }
.navnext { margin-left: 7px; }
.navlast { margin-left: 6px; }
.gauge { width: 14px; height: 12px; margin-left: 9px; }
.preflight { margin-left: 13px; width: 64px; }
.chevp { margin-left: 12px; }
.dot { width: 9px; height: 9px; border-radius: 50%; background: #3f9a2f; margin-left: 10px; }
.errors { margin-left: 4px; width: 37px; }
.cheve { margin-left: 9px; }
.hscroll { margin-left: 2px; flex: 1; height: 16px; background: #474747; display: flex; align-items: center; padding-left: 82px; padding-right: 21px; }
.hthumb { flex: 1; height: 13px; border-radius: 6px; background: #5a5a5a; }

/* dock */
.dock { flex: 1; display: flex; flex-direction: column; background: #535353; }
.dockhead { justify-content: flex-end; padding-right: 5px; height: 9px; background: #444; }
.pgroup { border-bottom: 1px solid #3a3a3a; padding-bottom: 2.200px; flex: none; }
.pgroup .gripbar { height: 7px; }
.gripbar.small::after { left: 55px; top: 1.500px; width: 15px; height: 3px; background: #454545; }
.pitem { height: 21.400px; display: flex; align-items: center; padding-left: 9px; font-size: 9.600px; font-weight: 700; color: #dcdcdc; white-space: nowrap; position: relative; letter-spacing: .1px; }
.pitem svg { width: 14px; height: 14px; margin-right: 7px; }
.gi { display: block; width: 14px; margin-right: 7px; text-align: center; color: #c8c8c8; font-weight: 400; }
.serif-i { font-family: "Liberation Serif", serif; font-style: italic; font-size: 16px; }
.fx { font-family: "Liberation Serif", serif; font-style: italic; font-size: 14px; }
.pilcrow { font-family: "Liberation Sans", sans-serif; font-weight: 700; font-size: 16px; }
.chara { font-family: "Open Sans", sans-serif; font-size: 14px; text-align: left; border-right: 1px solid #c8c8c8; height: 14px; line-height: 14px; }
.charb { position: absolute; left: 16px; top: 1px; width: 10px; margin: 0; font-size: 12px; }
.gradicon { display: block; width: 14px; height: 10px; margin-right: 7px; background: linear-gradient(to right, #222, #ddd); border: 1px solid #aaa; }
.dockrest { flex: 1; background: #4f4f4f; }
.deskstrip { height: 4px; flex: none; background: linear-gradient(to right, #9a9384 0, #a8a8a8 10%, #b4b4b4 100%); }
```
